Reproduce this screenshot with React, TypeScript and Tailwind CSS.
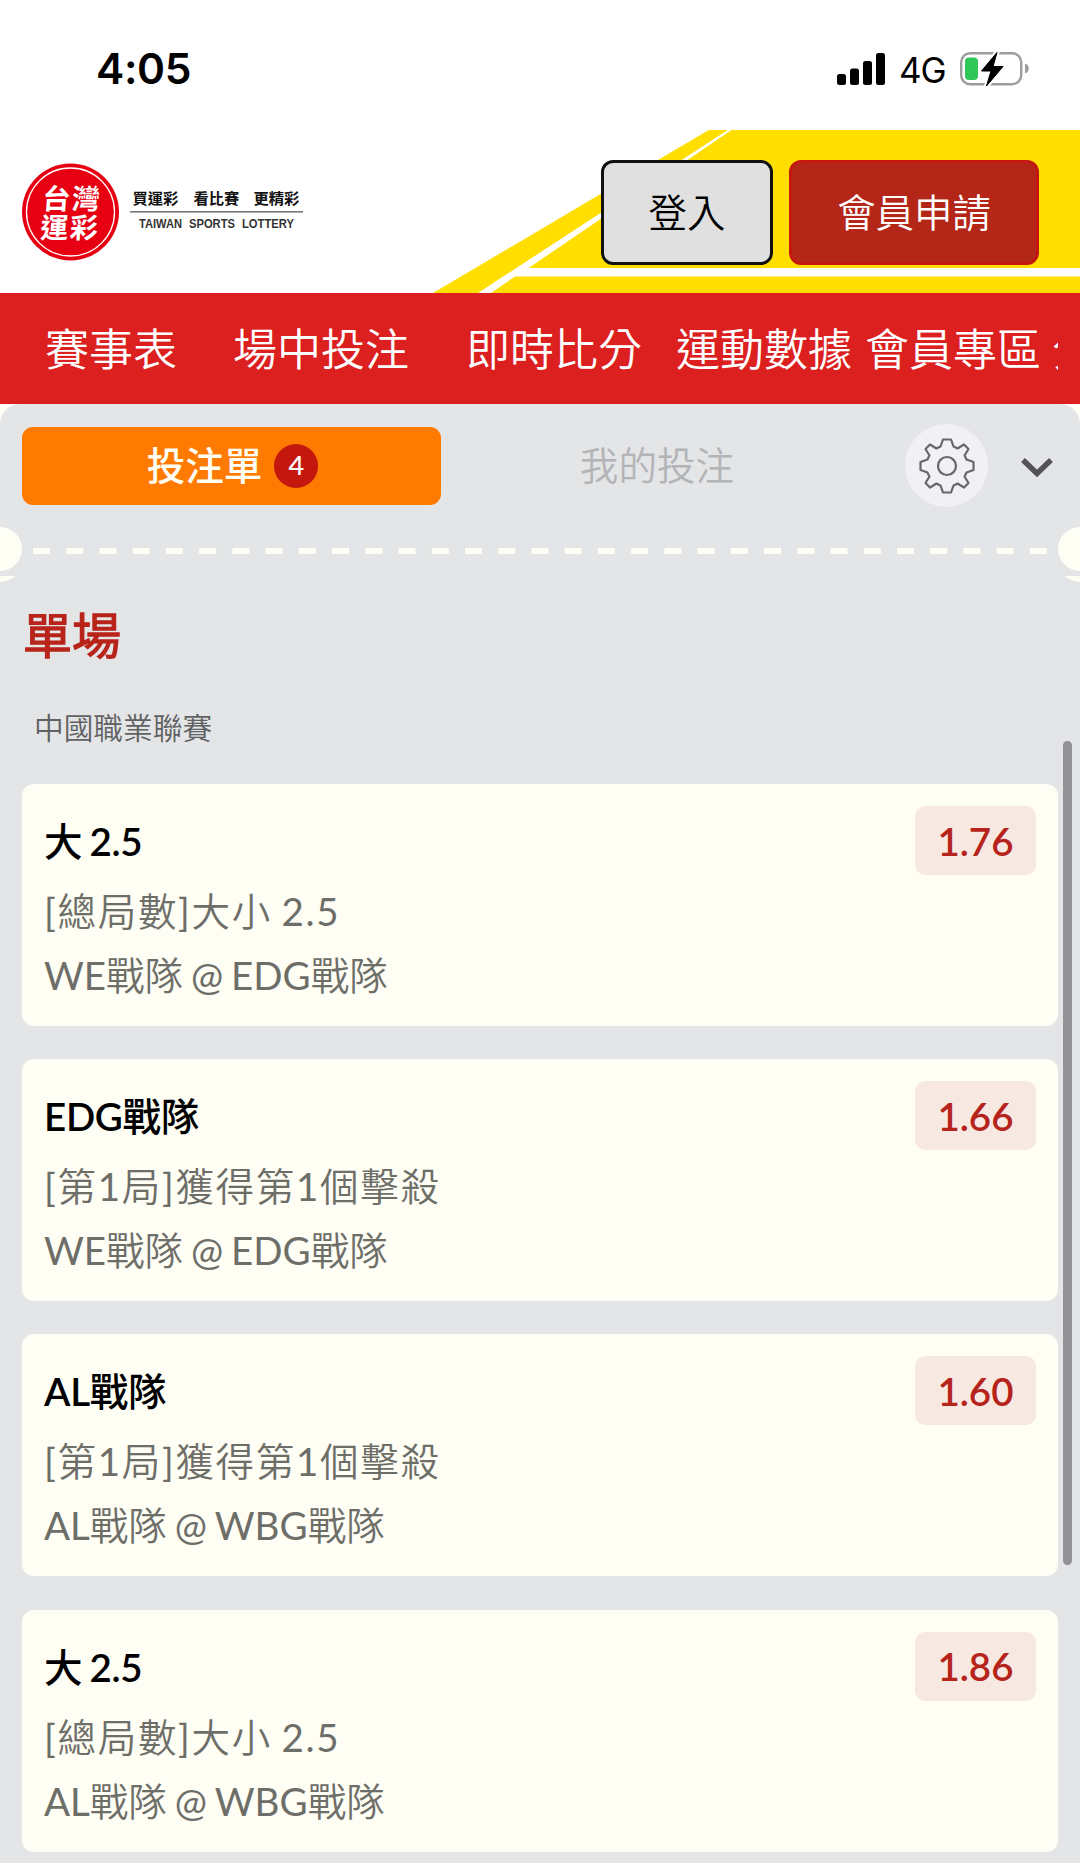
import { FC } from "react";

type Bet = {
	pick: string;
	market: string;
	match: string;
	odds: string;
};

const bets: Bet[] = [
	{ pick: "大 2.5", market: "[總局數]大小 2.5", match: "WE戰隊 @ EDG戰隊", odds: "1.76" },
	{ pick: "EDG戰隊", market: "[第1局]獲得第1個擊殺", match: "WE戰隊 @ EDG戰隊", odds: "1.66" },
	{ pick: "AL戰隊", market: "[第1局]獲得第1個擊殺", match: "AL戰隊 @ WBG戰隊", odds: "1.60" },
	{ pick: "大 2.5", market: "[總局數]大小 2.5", match: "AL戰隊 @ WBG戰隊", odds: "1.86" },
];

const navItems = [
	{ label: "賽事表", className: "w-[188px]" },
	{ label: "場中投注", className: "w-[233px]" },
	{ label: "即時比分", className: "w-[210px]" },
	{ label: "運動數據", className: "w-[189px]" },
	{ label: "會員專區", className: "w-[187px]" },
	{ label: "分", className: "w-[44px]" },
];

const StatusBar: FC = () => (
	<div className="flex h-[130px] items-start justify-between bg-white pl-[96px] pr-[50px] pt-[43px] font-['Inter',sans-serif] text-black">
		<span className="pt-[1px] text-[42.500px] leading-[50px] font-semibold tracking-[-0.400px]">4:05</span>
		<div className="flex h-[52px] items-center">
			<svg width="48" height="32" viewBox="0 0 48 32">
				<rect x="0" y="21" width="9" height="11" rx="2.5" />
				<rect x="13" y="15.5" width="9" height="16.5" rx="2.5" />
				<rect x="26" y="8" width="9" height="24" rx="2.5" />
				<rect x="39" y="0" width="9" height="32" rx="2.5" />
			</svg>
			<span className="ml-[14px] w-[47px] pt-[2px] text-[35px] leading-[50px] tracking-[-1px]">4G</span>
			<svg className="ml-[14px]" width="70" height="36" viewBox="0 0 70 36">
				<rect x="1.2" y="2.2" width="60" height="31" rx="9" fill="none" stroke="#9d9d9f" strokeWidth="2.4" />
				<path d="M65 12.500c5 1 5 9 0 10z" fill="#9d9d9f" />
				<rect x="5" y="6.5" width="13" height="22.5" rx="4" fill="#30c759" />
				<path
					d="M37 1.500L21.500 20H31L26.500 35L43 15.500H33Z"
					fill="#000"
					stroke="#fff"
					strokeWidth="5"
					strokeLinejoin="round"
					paintOrder="stroke"
				/>
				<path d="M37 1.500L21.500 20H31L26.500 35L43 15.500H33Z" stroke="#000" strokeWidth="1" strokeLinejoin="round" />
			</svg>
		</div>
	</div>
);

const Logo: FC = () => (
	<svg className="shrink-0" width="284" height="98" viewBox="0 0 284 98">
		<circle cx="48.500" cy="49" r="48.500" fill="#e60012" />
		<circle cx="48.500" cy="49" r="44" fill="none" stroke="#fff" strokeWidth="1.300" />
		<g
			fill="#fff"
			fontFamily="'Noto Sans CJK TC', sans-serif"
			fontWeight="700"
			fontSize="28"
			transform="translate(48 49) skewX(-4)"
		>
			<text x="-28.500" y="-3">台</text>
			<text x="1" y="-3">灣</text>
			<text x="-28.500" y="26">運</text>
			<text x="1" y="26">彩</text>
		</g>
		<g fill="#111" fontFamily="'Noto Sans CJK TC', sans-serif" fontWeight="700" fontSize="15.300">
			<text x="110.500" y="41">買運彩</text>
			<text x="171.500" y="41">看比賽</text>
			<text x="231.500" y="41">更精彩</text>
		</g>
		<rect x="108" y="48" width="173" height="1.600" fill="#777" />
		<g fill="#333" fontFamily="'Liberation Sans', Arial, sans-serif" fontWeight="700" fontSize="12">
			<text x="117" y="64.500" textLength="43" lengthAdjust="spacingAndGlyphs">TAIWAN</text>
			<text x="167" y="64.500" textLength="46" lengthAdjust="spacingAndGlyphs">SPORTS</text>
			<text x="220" y="64.500" textLength="52" lengthAdjust="spacingAndGlyphs">LOTTERY</text>
		</g>
	</svg>
);

const Header: FC = () => (
	<header className="relative h-[163px] bg-white">
		<svg className="absolute inset-0" width="1080" height="163" viewBox="0 130 1080 163">
			<path d="M708.700 130H1080V293H433Z" fill="#ffde00" />
			<path d="M727.700 130H731.500L528.600 268H1080V276.500H515L491 293H478Z" fill="#fff" />
		</svg>
		<div className="relative flex items-start pl-[22px] pr-[41px] pt-[30px]">
			<div className="pt-[3px]">
				<Logo />
			</div>
			<div className="ml-auto flex gap-4 font-['Noto_Sans_CJK_TC_DemiLight','Noto_Sans_CJK_TC',sans-serif]">
				<button className="h-[105px] w-[172px] rounded-xl border-[3px] border-[#111] bg-[#e0e0e0] pb-1 text-[38.400px] text-black">
					登入
				</button>
				<button className="h-[105px] w-[250px] rounded-xl border-[3px] border-[#c4180f] bg-[#b42718] pb-1 text-[38.400px] text-white">
					會員申請
				</button>
			</div>
		</div>
	</header>
);

const Nav: FC = () => (
	<nav className="h-[111px] bg-[#dc1f1f] pl-[45px] pr-[22px] font-['Noto_Sans_CJK_TC_DemiLight','Noto_Sans_CJK_TC',sans-serif]">
		<ul className="flex h-full items-center overflow-hidden pb-1 text-[44px] whitespace-nowrap text-white">
			{navItems.map((item) => (
				<li key={item.label} className={`shrink-0 ${item.className}`}>
					{item.label}
				</li>
			))}
		</ul>
	</nav>
);

const GearIcon: FC = () => (
	<svg width="56" height="56" viewBox="-28 -28 56 56" fill="none" stroke="#66676a" strokeWidth="2.2" strokeLinejoin="round">
		<circle r="9" />
		<path d="M-4 -26.500H4L6.500 -19.500Q9 -18.500 10.500 -17.500L17 -21.500L21.500 -17L17.500 -10.500Q18.500 -9 19.500 -6.500L26.500 -4V4L19.500 6.500Q18.500 9 17.500 10.500L21.500 17L17 21.500L10.500 17.500Q9 18.500 6.500 19.500L4 26.500H-4L-6.500 19.500Q-9 18.500 -10.500 17.500L-17 21.500L-21.500 17L-17.500 10.500Q-18.500 9 -19.500 6.500L-26.500 4V-4L-19.500 -6.500Q-18.500 -9 -17.500 -10.500L-21.500 -17L-17 -21.500L-10.500 -17.500Q-9 -18.500 -6.500 -19.500Z" />
	</svg>
);

const SlipTabs: FC = () => (
	<div className="flex h-[123px] items-center px-[22px]">
		<button className="flex h-[78px] w-[419px] items-center justify-center gap-[12px] rounded-[11px] bg-[#ff7a00] pl-[2px] font-['Lato','Noto_Sans_CJK_TC',sans-serif] text-[38.600px] font-medium text-[#fffef5]">
			投注單
			<span className="flex size-[44px] items-center justify-center rounded-full bg-[#c4180f] text-[27px] text-white">
				4
			</span>
		</button>
		<button className="w-[432px] pb-1 text-center font-['Noto_Sans_CJK_TC_DemiLight','Noto_Sans_CJK_TC',sans-serif] text-[38.600px] text-[#b3b4b6]">
			我的投注
		</button>
		<button className="ml-[32px] flex size-[83px] shrink-0 items-center justify-center rounded-full bg-[#f1f1f4]">
			<GearIcon />
		</button>
		<svg
			className="mt-[2px] ml-[32px] shrink-0"
			width="34"
			height="22"
			viewBox="0 0 34 22"
			fill="none"
			stroke="#525355"
			strokeWidth="5.500"
		>
			<path d="M3 4L17 17.500L31 4" />
		</svg>
	</div>
);

const TicketEdge: FC = () => (
	<>
		<div className="relative h-[49px] overflow-hidden">
			<span className="absolute top-0 -left-[22px] size-[44px] rounded-full bg-[#fffef5]" />
			<span className="absolute top-0 -right-[22px] size-[44px] rounded-full bg-[#fffef5]" />
			<svg className="absolute top-[21px] left-[33px]" width="1014" height="6">
				<line x1="0" x2="1014" y1="3" y2="3" stroke="#fffef5" strokeWidth="6" strokeDasharray="17 16.230" />
			</svg>
		</div>
		{/* lower notch, only its bottom edge shows */}
		<div className="relative h-[6px] overflow-hidden">
			<span className="absolute bottom-0 -left-[22px] size-[44px] rounded-full bg-[#fffef5]" />
			<span className="absolute -right-[22px] bottom-0 size-[44px] rounded-full bg-[#fffef5]" />
		</div>
	</>
);

const BetCard: FC<Bet> = (props) => {
	const { pick, market, match, odds } = props;
	return (
		<li className="flex h-[242px] items-start justify-between rounded-xl bg-[#fffef5] pr-[22px] pl-[22px] pt-[22px]">
			<div className="whitespace-nowrap text-[38.500px] text-[#6e6e69] [word-spacing:-2px]">
				<div className="mb-[3px] font-['Lato_Semibold','Lato','Noto_Sans_CJK_TC',sans-serif] leading-[70px] font-medium tracking-[-0.300px] text-black">
					{pick}
				</div>
				<div className="leading-[64px] tracking-[1.700px]">{market}</div>
				<div className="leading-[64px]">{match}</div>
			</div>
			<span className="flex h-[69px] w-[121px] items-center justify-center rounded-[10px] bg-[#f7e8e2] pt-[2px] text-[38.500px] font-semibold text-[#b5231b]">
				{odds}
			</span>
		</li>
	);
};

export default function App() {
	return (
		<div className="relative flex h-[1863px] w-[1080px] flex-col overflow-hidden bg-[#fffef5] font-['Lato','Noto_Sans_CJK_TC_DemiLight','Noto_Sans_CJK_TC',sans-serif]">
			<StatusBar />
			<Header />
			<Nav />
			<main className="flex-1 rounded-t-[20px] bg-[#e4e5e7]">
				<SlipTabs />
				<TicketEdge />
				<h2 className="mt-[18px] ml-[23px] text-[49px] leading-[70px] font-bold text-[#b8231a]">單場</h2>
				<p className="mt-[38px] ml-[34px] text-[29.700px] leading-[40px] text-[#606163]">中國職業聯賽</p>
				<ul className="mx-[22px] mt-[36px] flex flex-col gap-[33.200px]">
					{bets.map((bet, i) => (
						<BetCard key={i} {...bet} />
					))}
				</ul>
			</main>
			<span className="absolute top-[741px] right-[8px] h-[824px] w-[9px] rounded-full bg-[#929295]" />
		</div>
	);
}
